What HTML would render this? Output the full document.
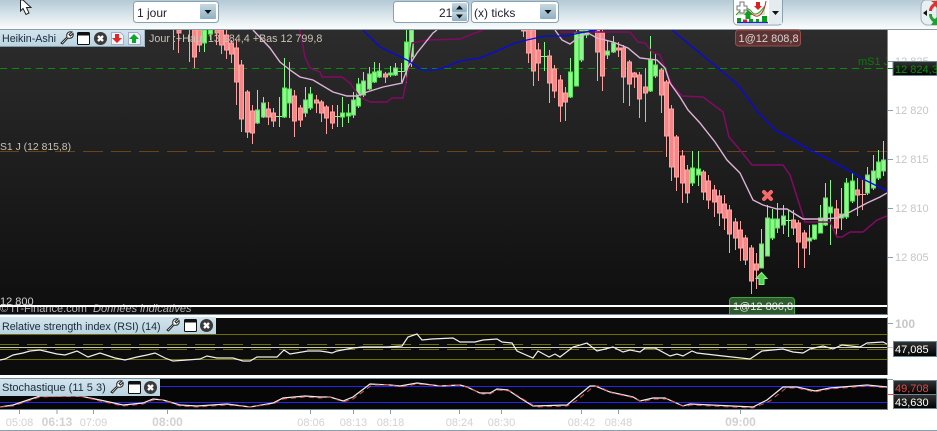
<!DOCTYPE html>
<html><head><meta charset="utf-8"><style>
html,body{margin:0;padding:0;background:#fff;width:937px;height:431px;overflow:hidden}
svg{display:block}
text{font-family:"Liberation Sans",sans-serif;font-size:11px}
.n{font-size:10.700px}
</style></head><body>
<svg width="937" height="431" viewBox="0 0 937 431" xmlns="http://www.w3.org/2000/svg">
<defs>
<linearGradient id="top" x1="0" y1="0" x2="0" y2="1"><stop offset="0" stop-color="#b4cad6"/><stop offset="1" stop-color="#fbfdfd"/></linearGradient>
<linearGradient id="bg" x1="0" y1="0" x2="0" y2="1"><stop offset="0" stop-color="#2c2c2c"/><stop offset="1" stop-color="#0e0e0e"/></linearGradient>
<linearGradient id="leg" x1="0" y1="0" x2="0" y2="1"><stop offset="0" stop-color="#d3e5ee"/><stop offset="1" stop-color="#b9d3e0"/></linearGradient>
<linearGradient id="btn" x1="0" y1="0" x2="0" y2="1"><stop offset="0" stop-color="#c6d9e3"/><stop offset="1" stop-color="#8fb0c2"/></linearGradient>
<linearGradient id="box" x1="0" y1="0" x2="0" y2="1"><stop offset="0" stop-color="#333"/><stop offset="1" stop-color="#000"/></linearGradient>
<clipPath id="mc"><rect x="0" y="30" width="887" height="276"/></clipPath>
<clipPath id="tt"><rect x="725" y="290" width="75" height="24"/></clipPath>
<path id="wr" d="M1 12 L7 6 C6 3 8 0 12 1 L9 3.500 L10.500 5 L13 2.500 C14 6 11 8 8 7 L2.500 13 Z" fill="#fff" stroke="#222" stroke-width="1"/>
<g id="win"><rect x="0.5" y="0.5" width="12" height="12" rx="1" fill="#fff" stroke="#111"/><rect x="0.5" y="0.5" width="12" height="3" fill="#111"/></g>
<g id="cl"><circle cx="6.5" cy="6.5" r="6.5" fill="#3a3a3a"/><path d="M4 4L9 9M9 4L4 9" stroke="#fff" stroke-width="2.4"/></g>
</defs>

<!-- toolbar -->
<rect width="937" height="29" fill="url(#top)"/>
<rect y="29" width="937" height="1" fill="#8c9ca5"/>
<path d="M20.500 0 V11 L23 8.500 L26 14.500 L29 13 L26.500 7.500 L31 7.500 L23 0Z" fill="#fff" stroke="#222"/>
<rect x="133.500" y="1.500" width="85" height="21" rx="3" fill="#fff" stroke="#8aa2b0"/>
<rect x="200" y="4" width="16" height="15" rx="1" fill="url(#btn)"/>
<path d="M204.500 10h7l-3.500 4z" fill="#111"/>
<text x="137" y="17" fill="#223" style="font-size:12px">1 jour</text>
<rect x="393.500" y="1.500" width="75" height="21" rx="3" fill="#fff" stroke="#8aa2b0"/>
<rect x="452" y="3" width="15" height="9" rx="1" fill="url(#btn)"/><rect x="452" y="12" width="15" height="9" rx="1" fill="url(#btn)"/>
<path d="M456 9.500l3.500-4 3.500 4zM456 14.500h7l-3.500 4z" fill="#111"/>
<text x="439" y="17" fill="#223" style="font-size:12px">21</text>
<rect x="471.500" y="1.500" width="87" height="21" rx="3" fill="#fff" stroke="#8aa2b0"/>
<rect x="540" y="4" width="16" height="15" rx="1" fill="url(#btn)"/>
<path d="M544.500 10h7l-3.500 4z" fill="#111"/>
<text x="474" y="17" fill="#223" style="font-size:12px">(x) ticks</text>
<!-- indicator button -->
<rect x="733.500" y="-3" width="49" height="28" rx="4" fill="#fff" stroke="#8aa2b0"/>
<rect x="769" y="-2" width="13" height="26" fill="#e4ecf0"/><path d="M772 11h7l-3.500 4z" fill="#111"/>
<path d="M737 22.500h31" stroke="#1a2ad8" stroke-width="1.500"/>
<path d="M737 18h4v4h-4zM749 19h4v3h-4zM756 19h3v3h-3zM762 16h5v6h-5z" fill="#0a9a1a"/><path d="M743 19.500h4v2.500h-4z" fill="#d02030"/>
<path d="M736 15 C742 8 748 6 752 12 C756 17 760 12 765 6 L765 15 L736 15z" fill="#cfe8c4"/>
<path d="M736 15 C742 8 748 6 752 12 C756 17 760 12 765 6" fill="none" stroke="#3a9a2a"/>
<path d="M738 9 C746 4 752 18 758 16 C762 15 765 8 766 1" fill="none" stroke="#c03030"/>
<path d="M737 6h3V2h4v4h3v4h-3v3h-4v-3h-3z" fill="#fff" stroke="#777"/>
<path d="M745.500 15h5v4h-5zM748 10l4 5h-8z" fill="#0aa020"/><path d="M756 2h4v4h2l-4 4-4-4h2z" fill="#e02020"/>
<!-- right icon -->
<path d="M937 0 H925 Q921 1 921 8 V18 Q921 23 926 25 H937Z" fill="#e8eff2" stroke="#9cb0bc"/>
<path d="M923 13l4-3v6z" fill="#111"/>
<path d="M929 11 C929 7 932 4 934 3 L931 1h6v7l-2-2 C933 8 932 9 932 11z" fill="#e03030"/>
<path d="M929 14h3 C932 17 933 18 935 19 L937 17v8h-6l2-3 C931 20 929 18 929 14z" fill="#20a030"/>

<!-- main chart -->
<rect x="0" y="30" width="887" height="284" fill="url(#bg)"/>
<g clip-path="url(#mc)">
<path d="M0 151.500H887" stroke="#6b4314" stroke-width="1" stroke-dasharray="20 8" stroke-dashoffset="1" fill="none"/>
<path d="M0 68.500H887" stroke="#0a8a0a" stroke-width="1" stroke-dasharray="7 5" fill="none"/>

<!-- red wicks -->
<path fill="none" stroke="#ffa0a0" stroke-width="1" d="M173.500 30V50M178.500 30V53M189.500 30V62M194.500 30V68M199.500 30V52M216.500 30V45M221.500 30V54M226.500 30V59M231.500 40V63M236.500 40V105M241.500 60V132M247.500 90V138M252.500 105V144M268.500 102V125M273.500 108V127M294.500 90V137M300.500 105V127M316.500 95V113M321.500 100V122M326.500 105V134M332.500 105V129M385.500 72V83M523.500 30V37M528.500 30V63M533.500 30V86M538.500 43V81M549.500 50V103M554.500 65V98M560.500 75V122M565.500 87V121M597.500 30V81M602.500 30V91M618.500 42V57M623.500 45V103M629.500 60V106M634.500 72V88M639.500 72V118M645.500 68V122M661.500 68V113M666.500 80V157M671.500 105V181M676.500 135V191M682.500 150V203M687.500 165V203M703.500 170V200M708.500 175V209M714.500 185V217M719.500 190V226M724.500 195V230M729.500 205V253M735.500 218V250M740.500 221V261M745.500 235V265M751.500 245V294M756.500 253V289M793.500 210V235M798.500 220V268M804.500 230V268M836.500 200V236M857.500 178V216M862.500 180V210"/>
<!-- green wicks -->
<path fill="none" stroke="#84f884" stroke-width="1" d="M204.500 30V52M210.500 30V40M257.500 90V124M263.500 97V118M279.500 97V127M284.500 58V118M289.500 62V118M305.500 87V117M310.500 87V110M337.500 105V127M342.500 97V127M348.500 104V123M353.500 92V118M358.500 78V108M363.500 72V97M369.500 67V90M374.500 62V83M379.500 63V78M390.500 66V77M395.500 63V76M401.500 63V82M406.500 30V83M411.500 30V67M544.500 42V71M570.500 58V98M576.500 30V86M581.500 30V62M586.500 30V38M607.500 40V59M613.500 36V53M650.500 36V92M655.500 53V78M692.500 151V186M698.500 151V186M761.500 229V268M767.500 205V256M772.500 209V240M777.500 203V233M783.500 205V234M788.500 210V237M809.500 225V255M814.500 225V240M820.500 205V233M825.500 183V226M830.500 180V245M841.500 188V230M846.500 178V219M852.500 173V203M867.500 167V195M873.500 155V190M878.500 150V180M883.500 141V176"/>
<path fill="none" stroke="#84f884" d="M275 116.500h8M334 116.500h7M397 71.500h8M541 56.500h7M785 220.500h7"/>
<path fill="none" stroke="#ffa0a0" d="M859 194.500h7"/>
<!-- red bodies -->
<path transform="translate(1 0)" fill="#f98686" stroke="#ffa3a3" stroke-width="1" d="M176 30h4V33h-4zM191.500 30h4V57h-4zM196.500 30h4V45h-4zM214 30h4V33h-4zM218.500 30h4V45h-4zM223.500 35h4V50h-4zM228.500 43h4V54h-4zM233.500 48h4V82h-4zM238.500 65h4V119h-4zM244.500 92h4V132h-4zM249.500 111h4V133h-4zM265.500 109h4V117h-4zM270.500 113h4V121h-4zM291.500 96h4V121h-4zM297.500 108h4V120h-4zM313.500 100h4V103h-4zM318.500 102h4V113h-4zM323.500 107h4V118h-4zM329.500 112h4V123h-4zM382.500 74h4V77h-4zM520.500 30h4V31h-4zM525.500 30h4V53h-4zM530.500 30h4V71h-4zM535.500 50h4V63h-4zM546.500 56h4V83h-4zM551.500 69h4V91h-4zM557.500 80h4V106h-4zM562.500 93h4V102h-4zM594.500 30h4V52h-4zM599.500 33h4V76h-4zM615.500 48h4V50h-4zM620.500 48h4V77h-4zM626.500 62h4V84h-4zM631.500 73h4V77h-4zM636.500 75h4V99h-4zM642.500 87h4V93h-4zM658.500 70h4V95h-4zM663.500 82h4V136h-4zM668.500 109h4V167h-4zM673.500 137h4V177h-4zM679.500 156h4V183h-4zM684.500 170h4V193h-4zM700.500 172h4V192h-4zM705.500 181h4V200h-4zM711.500 190h4V202h-4zM716.500 196h4V213h-4zM721.500 204h4V218h-4zM726.500 210h4V234h-4zM732.500 222h4V238h-4zM737.500 230h4V248h-4zM742.500 238h4V260h-4zM748.500 248h4V281h-4zM753.500 264h4V270h-4zM790.500 220h4V228h-4zM795.500 223h4V242h-4zM801.500 233h4V248h-4zM833.500 209h4V228h-4zM854.500 190h4V195h-4z"/>
<!-- green bodies -->
<path transform="translate(1 0)" fill="#8cf88c" stroke="#5ce05c" stroke-width="1" d="M201.500 30h4V43h-4zM207.500 30h4V34h-4zM254.500 110h4V123h-4zM260.500 103h4V117h-4zM281.500 88h4V117h-4zM286.500 89h4V103h-4zM302.500 100h4V113h-4zM307.500 94h4V108h-4zM339.500 113h4V117h-4zM345.500 113h4V116h-4zM350.500 100h4V115h-4zM355.500 84h4V106h-4zM360.500 81h4V95h-4zM366.500 74h4V89h-4zM371.500 72h4V82h-4zM376.500 71h4V77h-4zM387.500 73h4V75h-4zM392.500 68h4V75h-4zM403.500 42h4V71h-4zM408.500 30h4V57h-4zM567.500 72h4V97h-4zM573.500 33h4V86h-4zM578.500 30h4V60h-4zM583.500 30h4V35h-4zM604.500 51h4V55h-4zM610.500 43h4V52h-4zM647.500 60h4V91h-4zM652.500 65h4V76h-4zM689.500 168h4V183h-4zM695.500 169h4V175h-4zM758.500 244h4V268h-4zM764.500 218h4V256h-4zM769.500 219h4V238h-4zM774.500 219h4V228h-4zM780.500 216h4V225h-4zM806.500 238h4V241h-4zM811.500 225h4V239h-4zM817.500 218h4V233h-4zM822.500 198h4V225h-4zM827.500 207h4V213h-4zM838.500 214h4V218h-4zM843.500 183h4V217h-4zM849.500 181h4V201h-4zM864.500 175h4V193h-4zM870.500 171h4V188h-4zM875.500 162h4V178h-4zM880.500 160h4V171h-4z"/>

<!-- magenta -->
<path fill="none" stroke="#820a64" stroke-width="1.500" d="M300 30L305 57 310 68 320 72 322 77 342 77 350 83 360 97 370 102 387 102 392 98 403 98 408 72 412 43 427 40 460 39 470 35 483 30"/>
<path fill="none" stroke="#820a64" stroke-width="1.500" d="M560 32L630 32 638 42 645 43 652 52 660 55 663 63 672 85 682 96 703 97 723 112 729 137 740 150 752 165 783 165 790 175 805 222 830 222 837 237 842 237 850 232 863 232 877 220 887 216"/>
<!-- pink -->
<path fill="none" stroke="#deb4d8" stroke-width="1.400" d="M253 30L270 48 280 62 290 70 300 77 313 80 333 92 347 96 357 96 367 92 383 87 402 83 408 67 417 53 433 33 437 30"/>
<path fill="none" stroke="#deb4d8" stroke-width="1.400" d="M555 30L562 40 570 44 578 38 588 33 597 38 613 42 628 48 640 58 657 60 665 68 670 83 680 97 688 110 700 123 715 142 727 160 740 173 753 200 763 205 777 209 787 209 803 219 820 219 837 218 850 212 867 203 880 197 887 193"/>
<!-- blue -->
<path fill="none" stroke="#0808e8" stroke-width="1.300" d="M363 30L380 47 407 60 422 70 433 70 443 68 460 61 480 58 497 51 515 43 527 40 545 36 565 36 585 32 597 30"/>
<path fill="none" stroke="#0808e8" stroke-width="1.300" d="M672 30L690 45 718 68 738 85 757 111 775 130 810 150 830 160 853 173 865 180 887 191"/>

<!-- markers -->
<path d="M764 192L771 199M771 192L764 199" stroke="#f56b6b" stroke-width="4" stroke-linecap="round"/>
<path d="M761.500 272.500l5.500 6h-3v6h-5v-6h-3z" fill="#4fd84f" stroke="#8cf08c"/>
<text class="n" x="0" y="150" fill="#c8c4ba" style="font-size:10.400px">S1 J (12 815,8)</text>
<text x="858" y="65" fill="#0a7a0a">mS1 J</text>
<text x="0" y="305" fill="#cfcfcf">12 800</text>
</g>
<text x="149" y="42" fill="#c9c2b4" style="font-size:10.750px">Jour :+Haut 13 184,4 +Bas 12 799,8</text>
<text x="0" y="312" fill="#b8b8b8">© IT-Finance.com <tspan dx="3" font-style="italic">Données indicatives</tspan></text>
<!-- tooltips -->
<rect x="735.500" y="30" width="65" height="16" rx="3" fill="#5c3434" stroke="#9c4c4c"/>
<text x="738.500" y="42" fill="#ded2d2">1@12 808,8</text>
<g clip-path="url(#tt)"><rect x="729.500" y="297.500" width="65" height="22" rx="3" fill="#2f5c2f" stroke="#3fa53f"/>
<text x="733" y="310" fill="#d8e4d8">1@12 806,8</text></g>
<rect x="0" y="305" width="887" height="2" fill="#fff"/>
<rect x="0" y="314" width="888" height="1" fill="#748c9a"/>
<rect x="887" y="30" width="1" height="285" fill="#748c9a"/>

<!-- main legend -->
<rect x="0" y="30" width="145" height="17" fill="url(#leg)"/>
<rect x="0" y="46" width="145" height="1" fill="#7f99a8"/><rect x="144" y="30" width="1" height="17" fill="#9fb6c3"/>
<text class="n" x="2" y="42" fill="#1a2a3a">Heikin-Ashi</text>
<use href="#wr" x="60" y="31"/><use href="#win" x="77" y="32"/><use href="#cl" x="94" y="32"/>
<path d="M111.500 32.500h9l3 3v9h-12z" fill="#eef4f7" stroke="#aac"/><path d="M115 34h4v4h3l-5 5-5-5h3z" fill="#e02828"/>
<path d="M128.500 32.500h9l3 3v9h-12z" fill="#eef4f7" stroke="#aac"/><path d="M134 34l5 5h-3v4h-4v-4h-3z" fill="#0aa82a"/>

<!-- right axis main -->
<g fill="#8aa0ac"><rect x="888" y="61" width="5" height="1"/><rect x="888" y="110" width="5" height="1"/><rect x="888" y="159" width="5" height="1"/><rect x="888" y="208" width="5" height="1"/><rect x="888" y="257" width="5" height="1"/></g>
<g fill="#c6c6c6"><text x="895" y="65">12 825</text><text x="895" y="114">12 820</text><text x="895" y="163">12 815</text><text x="895" y="212">12 810</text><text x="895" y="261">12 805</text></g>
<rect x="893" y="61.500" width="44" height="14" fill="url(#box)" stroke="#6c8796"/>
<text x="895" y="73" fill="#0d8a0d">12 824,3</text>
<path d="M888 68.500h5" stroke="#0a8a0a"/>

<!-- RSI -->
<rect x="0" y="316" width="887" height="2" fill="#fff"/>
<rect x="0" y="318" width="887" height="57" fill="#0c0c0c"/>
<path d="M0 334.500H887M0 359.500H887" stroke="#6f6f00"/>
<path d="M0 344.500H887M0 349.500H887" stroke="#6f6f00" stroke-dasharray="20 8" stroke-dashoffset="1"/>
<path d="M0 347.500H887" stroke="#c8c8c8"/>
<path fill="none" stroke="#efefef" stroke-width="1.200" d="M0 360L5 359 13 355 23 353 30 351 40 350 57 354 65 355 77 351 88 357 100 353 115 358 125 360 137 357 147 355 155 353 165 358 173 361 187 360 200 359 207 356 217 358 233 358 243 361 250 361 257 357 277 357 284 350 290 354 308 351 320 351 327 352 332 353 337 351 353 348 363 347 387 347 402 346 408 337 417 334 422 340 432 339 453 338 460 342 475 342 483 340 497 339 502 342 512 343 517 351 533 358 538 351 549 357 555 354 560 357 573 347 587 343 597 351 605 349 613 347 623 352 630 350 640 352 645 348 655 348 670 356 677 354 683 356 692 351 697 353 723 356 750 359 762 351 783 349 793 352 803 353 810 349 823 346 833 349 842 345 860 347 867 343 883 342 887 344"/>
<rect x="0" y="317" width="216" height="17" fill="url(#leg)"/>
<text class="n" x="2" y="330" fill="#1a2a3a">Relative strength index (RSI) (14)</text>
<use href="#wr" x="166" y="318"/><use href="#win" x="184" y="319"/><use href="#cl" x="200" y="319"/>
<rect x="887" y="317" width="1" height="58" fill="#748c9a"/>
<rect x="888" y="323" width="5" height="1" fill="#8aa0ac"/>
<text x="895" y="328" fill="#c6c6c6" style="font-size:12px;font-weight:bold">100</text>
<rect x="893.500" y="341.500" width="43" height="15" fill="url(#box)" stroke="#6c8796"/>
<text x="895" y="353" fill="#fff">47,085</text>
<path d="M888 347.500h5" stroke="#c8c8c8"/>

<!-- Stoch -->
<rect x="0" y="375" width="887" height="3" fill="#fff"/>
<rect x="0" y="378" width="887" height="1" fill="#748c9a"/>
<rect x="0" y="379" width="887" height="30" fill="#060606"/>
<path d="M0 386.500H887M0 402.500H887" stroke="#2424f0"/>
<path fill="none" stroke="#f0f0f0" stroke-width="1.200" d="M0 407L13 405 28 400 40 396 80 396 100 400 123 405 143 403 153 399 163 400 180 405 197 406 227 404 250 407 273 403 283 398 305 396 320 397 330 397 343 401 353 397 370 384 390 385 400 386 417 383 440 386 460 385 467 387 480 393 490 393 497 389 508 390 520 398 533 406 567 405 573 400 590 386 595 386 610 392 633 397 640 401 653 398 665 398 683 406 690 404 753 407 767 400 783 387 797 387 815 391 830 388 867 385 887 387"/>
<path fill="none" stroke="#e05050" stroke-width="1" stroke-dasharray="5 4" d="M0 407L13 406 28 401 40 397 80 396 100 401 123 406 143 404 153 400 163 400 180 406 197 407 227 405 250 407 273 404 283 399 305 397 320 398 330 397 343 402 353 399 372 385 390 385 400 387 417 384 440 386 460 385 469 388 482 394 490 394 497 390 510 391 523 399 536 407 567 406 576 401 593 387 598 386 612 393 635 398 642 402 653 399 667 399 686 407 690 405 753 408 770 401 786 388 797 388 815 392 830 389 867 386 887 388"/>
<rect x="0" y="379" width="160" height="17" fill="url(#leg)"/>
<text x="2" y="391" fill="#1a2a3a">Stochastique (11 5 3)</text>
<use href="#wr" x="110" y="380"/><use href="#win" x="128" y="381"/><use href="#cl" x="144" y="381"/>
<rect x="0" y="409" width="888" height="1" fill="#748c9a"/>
<rect x="887" y="379" width="1" height="31" fill="#748c9a"/>
<rect x="888" y="379" width="5" height="1" fill="#8aa0ac"/>
<path d="M888 394.500h5" stroke="#e05050"/>
<rect x="893.500" y="380.500" width="43" height="14" fill="url(#box)" stroke="#6c8796"/>
<text x="895" y="392" fill="#e04848">49,708</text>
<rect x="893.500" y="394.500" width="43" height="14" fill="url(#box)" stroke="#6c8796"/>
<text x="895" y="406" fill="#fff">43,630</text>

<!-- time axis -->
<g stroke="#8aa0ac"><path d="M19.500 410v4M57 410v4M93.500 410v4M167.500 410v4M310.500 410v4M353.500 410v4M390.500 410v4M459.500 410v4M501.500 410v4M581.500 410v4M618.500 410v4M740.500 410v4"/></g>
<g fill="#d2d2d2" text-anchor="middle">
<text x="19.500" y="426">05:08</text><text x="57" y="426" style="font-size:12px;font-weight:bold">06:13</text><text x="93.500" y="426">07:09</text><text x="167.500" y="426" style="font-size:12px;font-weight:bold">08:00</text><text x="311" y="426">08:06</text><text x="353.500" y="426">08:13</text><text x="390.500" y="426">08:18</text><text x="459.500" y="426">08:24</text><text x="501.500" y="426">08:30</text><text x="581.500" y="426">08:42</text><text x="618.500" y="426">08:48</text><text x="740.500" y="426" style="font-size:12px;font-weight:bold">09:00</text>
</g>
<rect x="0" y="430" width="937" height="1" fill="#8aa0ac"/>
</svg>
</body></html>
